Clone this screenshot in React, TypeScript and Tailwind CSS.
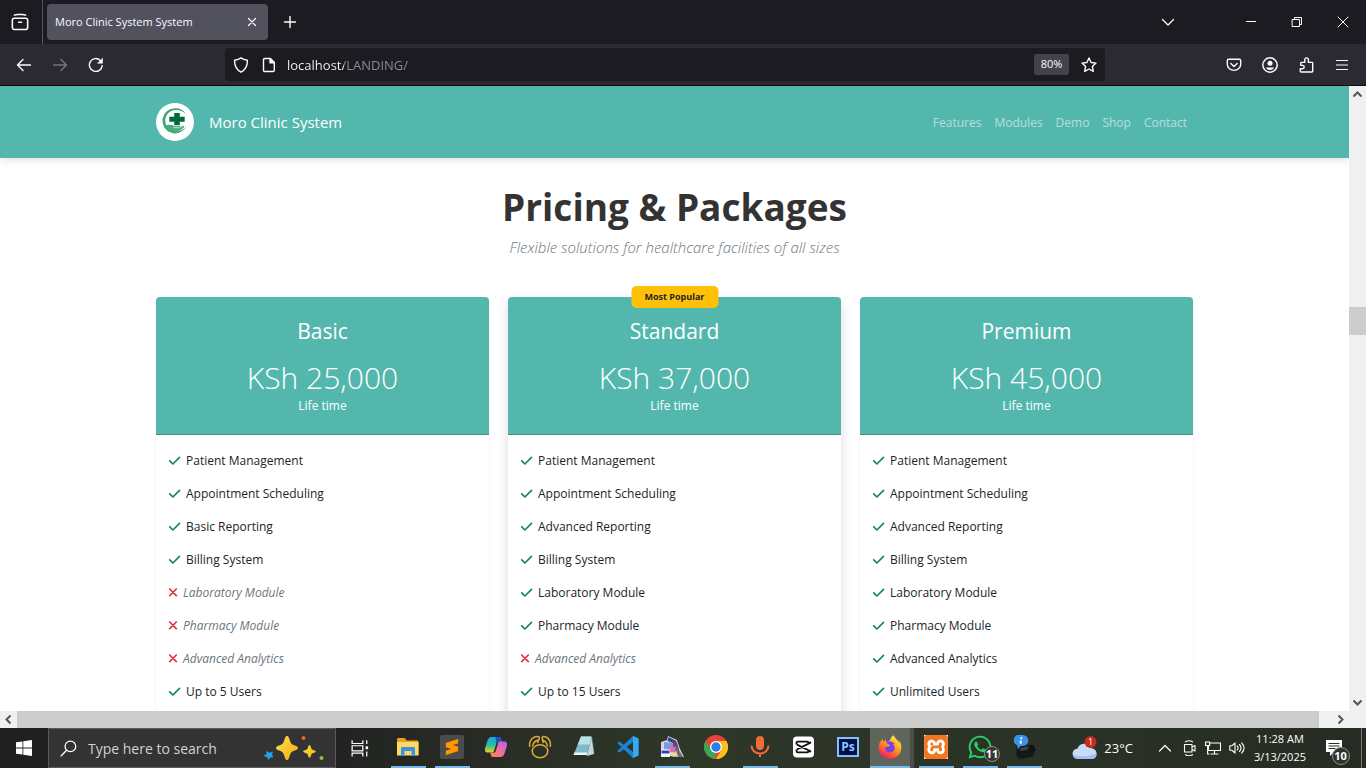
import React from "react";
import { SiXampp, SiSublimetext } from "react-icons/si";
import { FaFirefoxBrowser, FaWhatsapp } from "react-icons/fa6";

type Feature = { name: string; included: boolean };
type Plan = { title: string; price: string; popular?: boolean; features: Feature[] };

const yes = (name: string): Feature => ({ name, included: true });
const no = (name: string): Feature => ({ name, included: false });

const plans: Plan[] = [
  {
    title: "Basic",
    price: "KSh 25,000",
    features: [
      yes("Patient Management"),
      yes("Appointment Scheduling"),
      yes("Basic Reporting"),
      yes("Billing System"),
      no("Laboratory Module"),
      no("Pharmacy Module"),
      no("Advanced Analytics"),
      yes("Up to 5 Users"),
    ],
  },
  {
    title: "Standard",
    price: "KSh 37,000",
    popular: true,
    features: [
      yes("Patient Management"),
      yes("Appointment Scheduling"),
      yes("Advanced Reporting"),
      yes("Billing System"),
      yes("Laboratory Module"),
      yes("Pharmacy Module"),
      no("Advanced Analytics"),
      yes("Up to 15 Users"),
    ],
  },
  {
    title: "Premium",
    price: "KSh 45,000",
    features: [
      yes("Patient Management"),
      yes("Appointment Scheduling"),
      yes("Advanced Reporting"),
      yes("Billing System"),
      yes("Laboratory Module"),
      yes("Pharmacy Module"),
      yes("Advanced Analytics"),
      yes("Unlimited Users"),
    ],
  },
];

function Line({ size = 16, className = "", width = 1.4, children }: { size?: number; className?: string; width?: number; children: React.ReactNode }) {
  return (
    <svg
      width={size}
      height={size}
      viewBox="0 0 16 16"
      fill="none"
      stroke="currentColor"
      strokeWidth={width}
      strokeLinecap="round"
      strokeLinejoin="round"
      className={`shrink-0 ${className}`}
      aria-hidden="true"
    >
      {children}
    </svg>
  );
}

function IconButton({ label, className = "", children }: { label: string; className?: string; children: React.ReactNode }) {
  return (
    <button type="button" aria-label={label} className={`flex shrink-0 items-center justify-center ${className}`}>
      {children}
    </button>
  );
}

function TabBar() {
  return (
    <div className="flex h-11 shrink-0 bg-[#1c1b22] text-[#fbfbfe]">
      <IconButton label="Firefox View" className="w-[43px] border-r border-[#55545c] pr-0.5">
        <Line size={18}>
          <rect x="1.2" y="4.6" width="13.6" height="10" rx="1.8" />
          <path d="M3 1.9C4 1.3 5 1.3 6 1.3h4c1 0 2 0 3 .6M6.8 8.2h2.6" />
        </Line>
      </IconButton>
      <div className="ml-1 mt-1 flex h-9 w-[221px] items-center justify-between rounded bg-[#52515e] pl-2 pr-2">
        <span className="text-[11px]">Moro Clinic System System</span>
        <IconButton label="Close tab" className="size-4">
          <Line width={1.2}>
            <path d="M4.5 4.5l7 7M11.5 4.5l-7 7" />
          </Line>
        </IconButton>
      </div>
      <IconButton label="New tab" className="ml-3 w-5">
        <Line>
          <path d="M8 2.5v11M2.5 8h11" />
        </Line>
      </IconButton>
      <div className="flex-1" />
      <IconButton label="List all tabs" className="w-10">
        <Line width={1.3}>
          <path d="M2.5 5.5L8 11l5.500-5.500" />
        </Line>
      </IconButton>
      <IconButton label="Minimize" className="ml-10 w-[46px]">
        <Line width={1}>
          <path d="M3 7.500h10" strokeLinecap="butt" />
        </Line>
      </IconButton>
      <IconButton label="Restore" className="w-[46px]">
        <Line width={1}>
          <path d="M3.500 5.500h7v7h-7zM5.500 5.500v-2h7v7h-2" strokeLinejoin="miter" />
        </Line>
      </IconButton>
      <IconButton label="Close window" className="w-[46px]">
        <Line width={1}>
          <path d="M3 3l10 10M13 3L3 13" />
        </Line>
      </IconButton>
    </div>
  );
}

function AddressBar() {
  return (
    <div className="flex h-[42px] shrink-0 items-center border-b border-[#0c0c0d] bg-[#2b2a33] text-[#fbfbfe]">
      <div className="flex w-[225px] items-center gap-5 pl-4">
        <IconButton label="Back">
          <Line>
            <path d="M14.500 8H1.500M7 2.500L1.500 8 7 13.500" />
          </Line>
        </IconButton>
        <IconButton label="Forward" className="text-[#74737b]">
          <Line>
            <path d="M1.500 8h13M9 2.500L14.500 8 9 13.500" />
          </Line>
        </IconButton>
        <IconButton label="Reload">
          <Line>
            <path d="M14.200 8.600A6.400 6.400 0 1 1 12.300 3.400" />
            <path d="M14.500 1.500v4.700H9.800z" fill="currentColor" strokeWidth="0.6" />
          </Line>
        </IconButton>
      </div>
      <div className="flex h-[33px] flex-1 items-center rounded bg-[#1c1b22] pl-2 pr-2">
        <Line>
          <path d="M8 .9c2 1.500 4 2 6.400 2.300.2 4.800-1 9-6.400 12-5.400-3-6.600-7.200-6.400-12C4 2.900 6 2.400 8 .9z" />
        </Line>
        <Line className="ml-3">
          <path d="M3.700 1.500h5.600l4 4v7.700c0 .8-.5 1.300-1.300 1.300H3.700c-.7 0-1.200-.5-1.200-1.300V2.700c0-.7.500-1.200 1.200-1.200z" />
          <path d="M9 1.500v4.300h4.300z" fill="currentColor" />
        </Line>
        <input
          aria-label="Address"
          defaultValue="localhost/LANDING/"
          className="ml-2.5 min-w-0 flex-1 bg-[linear-gradient(90deg,#fbfbfe_57px,#8f8f97_57px)] bg-clip-text pt-0.5 text-[13px] text-transparent outline-none"
        />
        <button type="button" className="h-[21px] w-[35px] rounded-xs bg-[#42414d] text-[11px]">
          80%
        </button>
        <IconButton label="Bookmark this page" className="ml-3">
          <Line>
            <path d="M8 1l2.100 4.500 4.900.6-3.600 3.400.9 4.900L8 12l-4.300 2.400.9-4.900L1 6.100l4.900-.6z" />
          </Line>
        </IconButton>
      </div>
      <div className="flex w-[261px] items-center justify-end gap-5 pr-4">
        <IconButton label="Save to Pocket">
          <Line>
            <path d="M2.700 2.300h10.600c.8 0 1.400.6 1.400 1.400v3.500a6.700 6.200 0 0 1-13.400 0V3.700c0-.8.600-1.400 1.400-1.400z" />
            <path d="M4.900 6.500L8 9.400l3.100-2.900" />
          </Line>
        </IconButton>
        <IconButton label="Account">
          <Line width={1.500}>
            <circle cx="8" cy="8" r="7.200" />
            <circle cx="8" cy="6.200" r="2.500" fill="currentColor" stroke="none" />
            <path d="M3.800 10.600h8.400c-1 1.700-2.400 2.500-4.200 2.500s-3.300-.8-4.200-2.500z" fill="currentColor" stroke="none" />
          </Line>
        </IconButton>
        <IconButton label="Extensions">
          <Line>
            <path d="M3 15h11c.4 0 .7-.3.700-.7V6.100c0-.4-.3-.7-.7-.7h-3.600V2.700a1.800 1.800 0 0 0-3.600 0v2.700H3.500c-.4 0-.7.3-.7.700v2.300h1.700a1.700 1.700 0 0 1 0 3.400H2.300v2.500c0 .4.300.7.7.7z" />
          </Line>
        </IconButton>
        <IconButton label="Open menu">
          <Line width={1.200}>
            <path d="M2.500 3.500h11M2.500 8h11M2.500 12.500h11" />
          </Line>
        </IconButton>
      </div>
    </div>
  );
}

function ClinicLogo() {
  return (
    <svg width="38" height="38" viewBox="0 0 38 38" aria-hidden="true">
      <circle cx="19" cy="19" r="19" fill="#fff" />
      <path d="M30 11C27 6.500 23.500 5.200 19.500 5.200A12.600 12.600 0 1 0 30.500 23C27.500 27 24 28.500 20 28.300 13.500 28 9.300 23.500 9.300 17.800 9.300 11.500 14 7 20 7c4 0 7 1.300 10 4z" fill="#3ba974" />
      <path d="M9.500 22.500c3-1.300 6-.8 8.500.3h5.500c1.300.2 1.300 1.700 0 1.900h.5l3-1.800c1.300-.3 1.700.7.800 1.500L24 27.500c-5 2.500-10.500 1.500-14.500-5z" fill="#48ad7c" />
      <path d="M18.200 10h5.600v3.700h4.900v5h-4.900v3.300h-5.600v-3.300h-4.900v-5h4.900z" fill="#04683f" />
      <path d="M17.500 24.700h6" stroke="#fff" strokeWidth=".7" fill="none" />
    </svg>
  );
}

function CheckMark() {
  return (
    <svg width="13" height="13" viewBox="0 0 13 13" fill="none" stroke="#198754" strokeWidth="1.700" strokeLinecap="round" strokeLinejoin="round" aria-hidden="true">
      <path d="M1.700 6.800l3.200 3.200 6.600-6.600" />
    </svg>
  );
}

function CrossMark() {
  return (
    <svg width="10" height="13" viewBox="0 0 10 13" fill="none" stroke="#dc3545" strokeWidth="1.700" strokeLinecap="round" aria-hidden="true">
      <path d="M1.700 3l6.600 6.600M8.300 3l-6.600 6.600" />
    </svg>
  );
}

function PlanCard({ plan }: { plan: Plan }) {
  return (
    <article
      className={
        plan.popular
          ? "relative h-[520px] rounded bg-white shadow-[0_6px_13px_rgba(0,0,0,0.15)]"
          : "relative h-[520px] rounded bg-white shadow-[0_2px_3px_rgba(0,0,0,0.075)]"
      }
    >
      {plan.popular && (
        <span className="absolute left-1/2 top-0 flex h-[22px] w-[87px] -translate-x-1/2 -translate-y-1/2 items-center justify-center rounded-[5px] bg-[#ffc107] text-[9px] font-bold text-[#212529]">
          Most Popular
        </span>
      )}
      <header className="h-[138px] rounded-t border-b border-[#439389] bg-[#53b7ad] pt-5 text-center text-white">
        <h3 className="text-[21px] leading-7">{plan.title}</h3>
        <p className="mt-[15px] text-[30px] font-light leading-9">{plan.price}</p>
        <p className="text-xs leading-5">Life time</p>
      </header>
      <ul className="pl-3 pt-[9px] text-xs text-[#212529]">
        {plan.features.map((f) => (
          <li key={f.name} className="flex h-[33px] items-center gap-[5px]">
            {f.included ? <CheckMark /> : <CrossMark />}
            {f.included ? <span>{f.name}</span> : <em className="text-[#6c757d]">{f.name}</em>}
          </li>
        ))}
      </ul>
    </article>
  );
}

function Arrow({ d }: { d: string }) {
  return (
    <svg width="17" height="17" viewBox="0 0 17 17" fill="none" stroke="#555" strokeWidth="2" className="shrink-0" aria-hidden="true">
      <path d={d} />
    </svg>
  );
}

function WebPage() {
  return (
    <div className="flex min-h-0 flex-1 flex-col">
      <div className="flex min-h-0 flex-1">
        <div className="min-w-0 flex-1 overflow-hidden bg-white">
          <header className="relative h-[72px] bg-[#53b7ad] shadow-[0_2px_8px_rgba(0,0,0,0.12)]">
            <div className="mx-auto flex h-full max-w-[1037px] items-center justify-between">
              <a href="#home" className="flex items-center gap-[15px] text-[15px] text-white">
                <ClinicLogo />
                Moro Clinic System
              </a>
              <nav className="flex gap-[13px] pr-1.5 pt-0.5 text-xs text-white/55">
                <a href="#features">Features</a>
                <a href="#modules">Modules</a>
                <a href="#demo">Demo</a>
                <a href="#shop">Shop</a>
                <a href="#contact">Contact</a>
              </nav>
            </div>
          </header>
          <main className="mx-auto max-w-[1037px]">
            <div className="pt-6 text-center">
              <h1 className="text-[37px] font-bold leading-[50px] text-[#333]">Pricing &amp; Packages</h1>
              <p className="mt-[3px] text-[15px] font-light italic leading-6 text-[#6c757d]">Flexible solutions for healthcare facilities of all sizes</p>
            </div>
            <section className="mt-[38px] grid grid-cols-3 gap-[19px]">
              {plans.map((p) => (
                <PlanCard key={p.title} plan={p} />
              ))}
            </section>
          </main>
        </div>
        <div className="flex w-[17px] shrink-0 flex-col bg-[#f0f0f0]">
          <Arrow d="M4.500 10.500l4-4 4 4" />
          <div className="flex-[204]" />
          <div className="h-7 bg-[#cdcdcd]" />
          <div className="flex-[359]" />
          <Arrow d="M4.500 6.500l4 4 4-4" />
        </div>
      </div>
      <div className="flex h-[17px] shrink-0 bg-[#f0f0f0] pr-[17px]">
        <Arrow d="M10.500 4.500l-4 4 4 4" />
        <div className="flex-1 bg-[#cdcdcd]" />
        <div className="w-[13px]" />
        <Arrow d="M6.500 4.500l4 4-4 4" />
      </div>
    </div>
  );
}

function Art({ size = 24, children }: { size?: number; children: React.ReactNode }) {
  return (
    <svg width={size} height={size} viewBox="0 0 24 24" aria-hidden="true">
      {children}
    </svg>
  );
}

const explorer = (
  <Art>
    <path d="M1 4.500c0-.8.500-1.500 1.300-1.500h6.500l2 2.500H21c.8 0 1.500.6 1.500 1.400V20H1z" fill="#e8a317" />
    <path d="M1 7h21.500v13.500H1z" fill="#ffd76a" />
    <path d="M5 21v-7.500c0-.8.600-1.500 1.400-1.500h11.200c.8 0 1.400.7 1.400 1.500V21h-3.500v-5h-7v5z" fill="#3994dc" />
  </Art>
);

const sublime = (
  <span className="flex size-6 items-center justify-center rounded-xs bg-[#4b4b4d]">
    <SiSublimetext size={16} color="#ff9800" />
  </span>
);

const copilot = (
  <Art>
    <defs>
      <linearGradient id="cpA" x1="0" y1="0" x2="0" y2="1">
        <stop offset="0" stopColor="#1aa3e8" />
        <stop offset=".5" stopColor="#25bd9a" />
        <stop offset="1" stopColor="#e8d02a" />
      </linearGradient>
      <linearGradient id="cpB" x1="1" y1="0" x2="0" y2="1">
        <stop offset="0" stopColor="#a766f0" />
        <stop offset=".5" stopColor="#f36aa8" />
        <stop offset="1" stopColor="#ff8b45" />
      </linearGradient>
    </defs>
    <path d="M7.500 2h7.300c1.400 0 2 .9 2.300 2l.7 2.500h-2.500c-1.500 0-2.500.8-3 2.500l-2 6.500c-.4 1.300-1.200 2-2.500 2H4c-3 0-3.500-2-2.700-5l2-6.500C4.200 3.400 5.500 2 7.500 2z" fill="url(#cpA)" />
    <path d="M11.500 2h3.300c1.400 0 2 .9 2.300 2l.7 2.500h-2.500c-1.500 0-2.500.8-3 2z" fill="#1d4fc6" />
    <path d="M16.500 22H9.200c-1.400 0-2-.9-2.300-2l-.7-2.500h2.500c1.500 0 2.500-.8 3-2.500l2-6.500c.4-1.300 1.200-2 2.500-2H20c3 0 3.500 2 2.700 5l-2 6.500c-.9 2.600-2.200 4-4.200 4z" fill="url(#cpB)" />
    <path d="M10.300 15.500l2.300-7.500h1.600l-2.300 7.500c-.3 1-.7 1.500-1.300 2H9c.7-.5 1-1 1.300-2z" fill="#2c3428" />
  </Art>
);

const navicat = (
  <Art>
    <g fill="none" stroke="#d9ac3a" strokeWidth="1.500" strokeLinejoin="round">
      <ellipse cx="12" cy="16.300" rx="7.800" ry="6.500" />
      <path d="M2 12C.3 7 4 1.500 9.500 1.500c1.700 0 2.200 1 1.500 2.600L9.500 8" />
      <path d="M4.500 11.500C5 8.500 7 6 10 5" />
      <path d="M22 12C23.500 8 21 2 16 1.500c-1.600-.1-2.200 1-1.700 2.500l1 4" />
      <path d="M19.500 11.500c-.5-3-2-5.500-5-6.500" />
    </g>
  </Art>
);

const notepad = (
  <Art>
    <path d="M9 1.500l11.500.5L22.500 18 14 21.500z" fill="#44626d" />
    <path d="M9 1.500h10.500L15 20H1.500z" fill="#7fbccb" />
    <path d="M9 1.500h10.500l-2 8H5.700z" fill="#b8e0e6" />
    <path d="M1.500 20l1-2.500h13L15 20z" fill="#eef5f5" />
    <path d="M19.500 2l2.500 17-7 2z" fill="#c6d6d8" />
  </Art>
);

const vscode = (
  <Art>
    <path d="M17 1l5.500 2.500v17L17 23 7.800 14.300 3.500 17.600 1 16.300 5.600 12 1 7.700l2.500-1.300 4.300 3.300z" fill="#1c84cf" />
    <path d="M17 1l5.500 2.500v17L17 23z" fill="#32a9f0" />
    <path d="M17 7v10l-6.500-5z" fill="#2c3328" />
  </Art>
);

const collage = (
  <Art>
    <path d="M8 1l9 4 3 9 4 8h-6L1 19V7l6-2z" fill="#dcd5dc" />
    <path d="M8.500 2l8 4-1 3-8-3z" fill="#33498f" />
    <path d="M4 7l9 1v6H4z" fill="#6da0e6" />
    <path d="M13 8l4-1 2 8-6 2z" fill="#7a3f7c" />
    <path d="M8 11l8 1-1 6-8-2z" fill="#cf75ae" />
    <path d="M1 14.500h9V22H1z" fill="#f4f7fb" />
    <path d="M1.500 15.500h8v3h-8z" fill="#2946b8" />
    <path d="M12 17l4 1-1 4-5-1z" fill="#f2d887" />
    <path d="M16 15l2-4 1.500 5 3.500 6h-5z" fill="#6c6a78" />
  </Art>
);

const chrome = (
  <Art>
    <circle cx="12" cy="12" r="12" fill="#ea4335" />
    <path d="M1.600 6L9 18l3 0-1 6A12 12 0 0 1 1.600 6z" fill="#34a853" />
    <path d="M22.400 6H12l5.200 9L12 24A12 12 0 0 0 22.400 6z" fill="#fbc116" />
    <circle cx="12" cy="12" r="6" fill="#fff" />
    <circle cx="12" cy="12" r="4.700" fill="#2f7de9" />
  </Art>
);

const microphone = (
  <Art>
    <rect x="8" y="1" width="8" height="14" rx="4" fill="#f26a36" />
    <path d="M3.500 10.500a8.500 8 0 0 0 17 0M12 18.500V22" stroke="#f26a36" strokeWidth="2" fill="none" />
  </Art>
);

const capcut = (
  <Art>
    <rect x="1" y="1.500" width="21" height="21" rx="4" fill="#fff" />
    <path d="M4.500 9.500V8c0-.9.500-1.400 1.400-1.400h9.200c.9 0 1.400.5 1.400 1.400v.5l2.500-1.300M4.500 14.500V16c0 .9.500 1.400 1.400 1.400h9.200c.9 0 1.400-.5 1.400-1.400v-.5l2.500 1.300M5 9.700l14 6.800M5 14.300l14-6.800" stroke="#111" strokeWidth="1.900" fill="none" />
  </Art>
);

const photoshop = (
  <span className="flex h-5 w-[22px] items-center justify-center border-2 border-[#7fc4f7] bg-[#050d4c] text-xs font-bold leading-none text-[#86caff]">
    Ps
  </span>
);

const firefox = (
  <Art>
    <defs>
      <linearGradient id="ffx" x1=".8" y1="0" x2=".2" y2="1">
        <stop offset="0" stopColor="#fff04a" />
        <stop offset=".45" stopColor="#ff9a1f" />
        <stop offset=".75" stopColor="#ff4a3d" />
        <stop offset="1" stopColor="#e31587" />
      </linearGradient>
    </defs>
    <circle cx="12" cy="12.500" r="8" fill="#7a42dc" />
    <FaFirefoxBrowser size={24} fill="url(#ffx)" />
  </Art>
);

const xampp = (
  <span className="flex size-6 items-center justify-center bg-white">
    <SiXampp size={24} color="#f37623" />
  </span>
);

const camera = (
  <Art size={26}>
    <path d="M5 12l13-2 5 4-3 7-12 2-3-3z" fill="#15181b" />
    <path d="M8 13l9-2 3 2-11 3z" fill="#3b4146" />
    <circle cx="19" cy="13" r="3" fill="#0f1114" />
    <path d="M6 1h5a5 5 0 0 1 0 10H9l-3 3v-3.500A5 5 0 0 1 6 1z" fill="#3993ea" />
    <path d="M9.500 3v1.500M9 6v3" stroke="#fff" strokeWidth="1.800" />
  </Art>
);

const whatsapp = (
  <span className="relative flex">
    <FaWhatsapp size={26} color="#25d366" />
    <span className="absolute left-[17px] top-3 flex size-4 items-center justify-center rounded-full border border-[#8b8f88] bg-[#343833] text-[11px] font-bold text-white">
      11
    </span>
  </span>
);

type TaskApp = { name: string; icon: React.ReactNode; state?: "open" | "active" };

const apps: TaskApp[] = [
  { name: "File Explorer", icon: explorer, state: "open" },
  { name: "Sublime Text", icon: sublime, state: "open" },
  { name: "Copilot", icon: copilot },
  { name: "Navicat", icon: navicat },
  { name: "Notepad", icon: notepad },
  { name: "Visual Studio Code", icon: vscode },
  { name: "Image Collage", icon: collage, state: "open" },
  { name: "Chrome", icon: chrome },
  { name: "Voice Recorder", icon: microphone, state: "open" },
  { name: "CapCut", icon: capcut },
  { name: "Photoshop", icon: photoshop },
  { name: "Firefox", icon: firefox, state: "active" },
  { name: "XAMPP", icon: xampp, state: "open" },
  { name: "WhatsApp", icon: whatsapp, state: "open" },
  { name: "Camera", icon: camera, state: "open" },
];

function TaskButton({ app }: { app: TaskApp }) {
  const active = app.state === "active";
  return (
    <button
      type="button"
      aria-label={app.name}
      className={active ? "flex w-11 flex-col items-center border-r-4 border-[#4a5047] bg-[#5f645c]" : "flex w-11 flex-col items-center"}
    >
      <span className="flex flex-1 items-center justify-center">{app.icon}</span>
      <span className={active ? "h-0.5 w-full bg-[#76b9ed]" : app.state === "open" ? "h-0.5 w-[35px] bg-[#76b9ed]" : "h-0.5 w-[35px]"} />
    </button>
  );
}

function Taskbar() {
  return (
    <footer className="flex h-10 shrink-0 items-stretch bg-linear-to-r from-[#202020] from-20% via-[#2f3729] via-50% to-[#262c23] text-white">
      <IconButton label="Start" className="w-12">
        <svg width="16" height="16" viewBox="0 0 16 16" fill="#fff" aria-hidden="true">
          <path d="M0 2.300L6.500 1.400v6.200H0zM7.300 1.300L16 0v7.600H7.300zM0 8.400h6.500v6.200L0 13.700zM7.300 8.400H16V16l-8.700-1.300z" />
        </svg>
      </IconButton>
      <label className="flex w-72 items-center border border-[#5a5a5a] bg-[#333] pl-[11px]">
        <Line size={17} width={1.200}>
          <circle cx="9.800" cy="6" r="5" />
          <path d="M6.200 9.700L1 15" />
        </Line>
        <input
          aria-label="Type here to search"
          placeholder="Type here to search"
          className="ml-[11px] w-0 flex-1 bg-transparent pt-0.5 text-sm text-white placeholder-[#d2d2d2] outline-none"
        />
        <svg width="64" height="28" viewBox="0 0 64 28" className="mr-2" aria-hidden="true">
          <defs>
            <linearGradient id="spark" x1="0" y1="0" x2="1" y2="1">
              <stop offset="0" stopColor="#ffe34f" />
              <stop offset="1" stopColor="#f6a90c" />
            </linearGradient>
          </defs>
          <path d="M24 2c1.600 0 2 2 3 5s2 3.500 5 4.500c4 1.400 4 3.600 0 5-3 1-4 1.500-5 4.500s-1.400 5-3 5-2-2-3-5-2-3.500-5-4.500c-4-1.400-4-3.600 0-5 3-1 4-1.500 5-4.500s1.400-5 3-5z" fill="url(#spark)" />
          <path d="M46.500 11c1.200 0 1.500 3.500 2.300 4.200s4 1 4 2.300-3.200 1.300-4 2.300-1.100 4-2.300 4-1.500-3-2.300-4-4-1-4-2.300 3.200-1.600 4-2.300 1.100-4.200 2.300-4.200z" fill="url(#spark)" />
          <path d="M3.500 17l3.200 1.700 3.300-1.200-1 3 1.300 2.700-3.200.2L5.500 26l-1.300-2.700L.5 22l3-2z" fill="#1ea5ee" />
          <circle cx="40.500" cy="4" r="2" fill="#ee6326" />
          <circle cx="58.500" cy="24" r="2" fill="#86c440" />
        </svg>
      </label>
      <IconButton label="Task View" className="mr-0.5 w-12">
        <Line size={18} width={1.100}>
          <path d="M1 1v3h9.500V1M1 15.500v-3h9.500v3M1 6h9.500v4.500H1zM14 1v3.500M14 11v4.500" strokeLinecap="butt" strokeLinejoin="miter" />
          <rect x="13" y="6.500" width="2.200" height="2.600" fill="currentColor" stroke="none" />
        </Line>
      </IconButton>
      {apps.map((a) => (
        <TaskButton key={a.name} app={a} />
      ))}
      <div className="flex-1" />
      <button type="button" className="flex items-center gap-1.5 text-sm">
        <svg width="26" height="24" viewBox="0 0 26 24" aria-hidden="true">
          <path d="M6 23a5.300 5.300 0 0 1-.3-10.600A6.700 6.700 0 0 1 17.800 11a5.200 5.200 0 0 1 2.200 1.500A5.300 5.300 0 0 1 20 23z" fill="#c6dcf8" />
          <path d="M1 19c7 2 14 2 23.500-1.500A5.300 5.300 0 0 1 20 23H6a5.300 5.300 0 0 1-5-4z" fill="#9fc0f0" />
          <circle cx="18.500" cy="6" r="6" fill="#c92a1e" />
          <text x="18.500" y="9" textAnchor="middle" fontSize="9" fill="#fff">1</text>
        </svg>
        <span className="text-[13px]">23°C</span>
      </button>
      <div className="ml-6 flex items-center gap-2">
        <Line width={1.200}>
          <path d="M2.500 11L8 5.500l5.500 5.500" />
        </Line>
        <Line width={1.100}>
          <path d="M4.500 1.800c2-1.200 5-1.200 7 0M4.500 14.700c2 1.200 5 1.200 7 0M3.500 4.500h7.500v7.500H3.500zM11 7l3-1.500v5.500L11 9.500" />
        </Line>
        <Line width={1.100}>
          <path d="M5 3h10.500v7.500H3.500V6M9.500 10.500v3.500M6 14h7M.6 2h4v3.500h-4zM2.600 5.500V14h1.500" strokeLinejoin="miter" />
        </Line>
        <Line width={1.100}>
          <path d="M.8 5.800h2L6 3v10L2.800 10.200h-2zM8.300 6c1 1 1 3 0 4M10.500 4.500c2 2 2 5 0 7M12.800 3c3 3 3 7 0 10" />
        </Line>
      </div>
      <button type="button" className="ml-[9px] flex flex-col items-center justify-center text-[11px] leading-[18px]">
        <span>11:28 AM</span>
        <span>3/13/2025</span>
      </button>
      <IconButton label="10 notifications" className="ml-3 w-11 border-r border-[#777b74] pr-3">
        <span className="relative flex">
          <svg width="18" height="18" viewBox="0 0 18 18" aria-hidden="true">
            <path d="M1 1h16v12H9l-4 4v-4H1z" fill="#fff" />
            <path d="M3.500 4.500h11M3.500 7h11M3.500 9.500h7" stroke="#282d25" />
          </svg>
          <span className="absolute left-[7px] top-2 flex size-[18px] items-center justify-center rounded-full border border-[#8b8f88] bg-[#30342e] text-[11px] font-bold text-white">
            10
          </span>
        </span>
      </IconButton>
      <div className="w-1" />
    </footer>
  );
}

export default function App() {
  return (
    <div className="flex h-screen flex-col overflow-hidden font-['Open_Sans','Noto_Sans',sans-serif]">
      <TabBar />
      <AddressBar />
      <WebPage />
      <Taskbar />
    </div>
  );
}
